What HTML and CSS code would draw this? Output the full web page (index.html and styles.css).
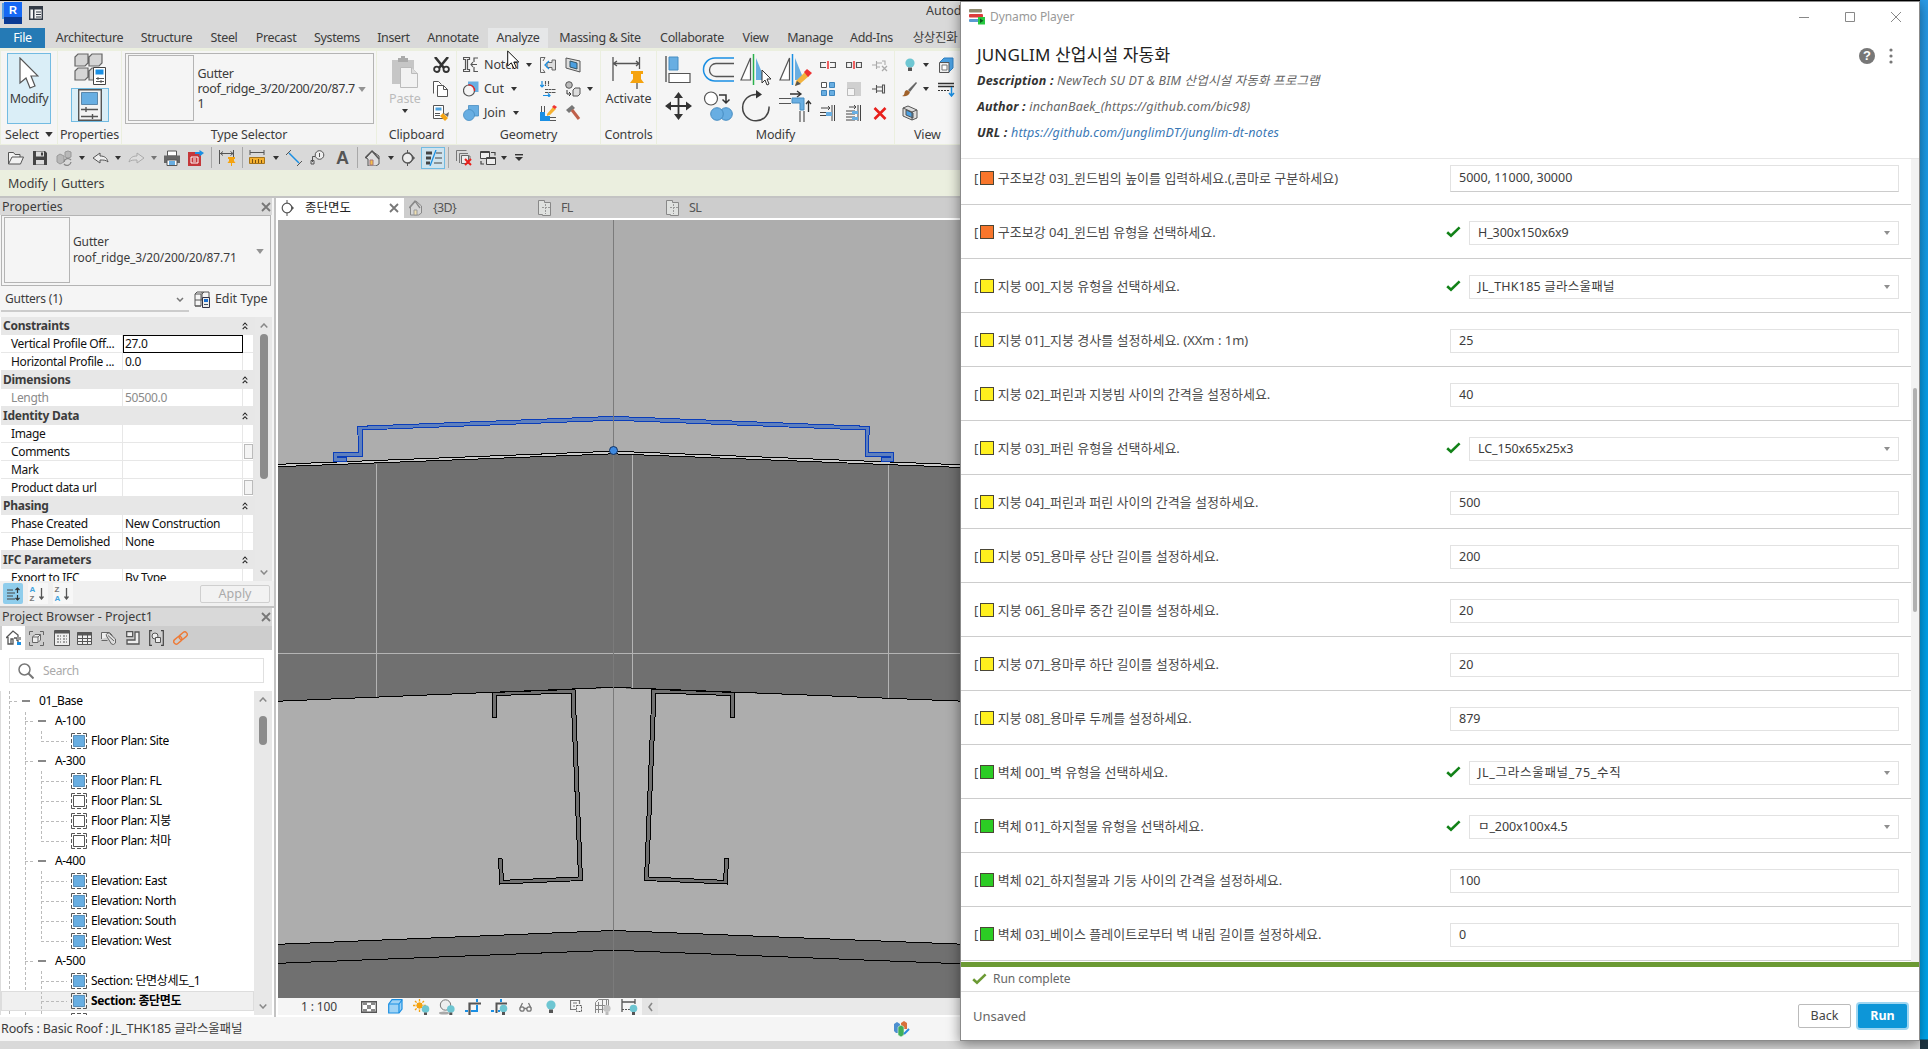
FILE: index.html
```html
<!DOCTYPE html>
<html lang="ko">
<head>
<meta charset="utf-8">
<title>Autodesk Revit - Dynamo Player</title>
<link rel="stylesheet" href="styles.css">
</head>
<body>
<svg class="defs" aria-hidden="true">
  <symbol id="arr" viewBox="0 0 6 4"><path d="M0 0h6L3 4z" fill="#333"/></symbol>
  <symbol id="chk" viewBox="0 0 15 12"><path d="M1.2 6.2 5 9.8 13.6 1.4" fill="none" stroke="currentColor" stroke-width="2.6"/></symbol>
  <symbol id="x" viewBox="0 0 10 10"><path d="M1 1l8 8M9 1 1 9" stroke="#777" stroke-width="1.8"/></symbol>
  <symbol id="up2" viewBox="0 0 6 8"><path d="M.7 3.5 3 1l2.3 2.5M.7 7.2 3 4.7l2.3 2.5" fill="none" stroke="#222" stroke-width="1.1"/></symbol>
  <symbol id="chev" viewBox="0 0 8 5"><path d="M.7 4.4 4 1l3.300 3.400" fill="none" stroke="#888" stroke-width="1.500"/></symbol>
  <symbol id="vw" viewBox="0 0 16 16"><path d="M.5 4V.5H4M6 .5h4M12 .5h3.500V4M15.500 6v4M15.500 12v3.500H12M10 15.500H6M4 15.500H.5V12M.5 10V6" fill="none" stroke="#555"/><path d="M2.500 2.500h11v11h-11z" fill="#68aee2" stroke="#5a8fb8"/></symbol>
  <symbol id="vwo" viewBox="0 0 16 16"><path d="M.5 4V.5H4M6 .5h4M12 .5h3.500V4M15.500 6v4M15.500 12v3.500H12M10 15.500H6M4 15.500H.5V12M.5 10V6" fill="none" stroke="#555"/><path d="M2.500 2.500h11v11h-11z" fill="#fff" stroke="#555"/></symbol>
  <symbol id="bulb" viewBox="0 0 10 14"><circle cx="5" cy="5" r="4.600" fill="#6ec6d2"/><path d="M3 9.500h4V13H3z" fill="#555"/></symbol>
  <symbol id="sheet" viewBox="0 0 14 16"><path d="M.5.500h6v2h6v13H4.500v-1h-4z" fill="#dfe1df" stroke="#888"/><path d="M7.500 4v10M4 7.500h8" stroke="#999" stroke-dasharray="2 1"/></symbol>
</svg>

<div class="desktop">
<main class="revit">
  <header class="titlebar">
    <svg width="20" height="22" viewBox="0 0 20 22"><path d="M0 1h18v16H0z" fill="#5b9fe0"/><path d="M2 0h18v15H2z" fill="#1568f4"/><path d="M2 15h18v7H2z" fill="#0a3a94"/><text x="7" y="12" class="logo-r">R</text></svg>
    <svg width="14" height="14" viewBox="0 0 14 14"><path d="M.7.700h12.600v12.600H.7z" fill="#f4f4f4" stroke="#333a45" stroke-width="1.400"/><path d="M1 1h12v2.500H1zM4 3h1.500v10H4z" fill="#333a45"/><path d="M7 6h5M7 8.500h5M7 11h5" stroke="#333a45"/></svg>
    <span class="app-name">Autodesk</span>
  </header>
  <nav class="tabs">
    <span class="file">File</span><span>Architecture</span><span>Structure</span><span>Steel</span><span>Precast</span><span>Systems</span><span>Insert</span><span>Annotate</span><span class="hover">Analyze</span><span>Massing &amp; Site</span><span>Collaborate</span><span>View</span><span>Manage</span><span>Add-Ins</span><span>상상진화</span>
  </nav>

  <section class="ribbon">
    <div class="panel p-select">
      <div class="big on">
        <svg width="20" height="32" viewBox="0 0 20 32"><path d="M1 1v25l6-5 4 10 5-2-4-10h7z" fill="#fff" stroke="#555" stroke-width="1.200"/></svg>
        <span>Modify</span>
      </div>
      <footer>Select <svg width="8" height="5"><use href="#arr"/></svg></footer>
    </div>
    <div class="panel p-props">
      <svg width="32" height="32" viewBox="0 0 32 32"><g fill="#d5d5d5" stroke="#666" stroke-width="1.200"><path d="M1 4l3-3h10v9l-3 3H1zM15 4l3-3h10v9l-3 3H15zM1 18l3-3h10v9l-3 3H1zM15 18l3-3h10v9l-3 3H15z"/></g><path d="M19.500 14.500h12v17h-12z" fill="#fff" stroke="#444"/><path d="M21.500 16.500h8v5h-8z" fill="#1a8fe3"/><path d="M22 25.500h8M22 28.500h8M24 24v3M27 27v3" stroke="#555"/></svg>
      <div class="props-on"><svg width="24" height="32" viewBox="0 0 24 32"><path d="M.7.700h22.600v30.600H.7z" fill="#f3f3f3" stroke="#555" stroke-width="1.400"/><path d="M3.500 3.500h16v12h-16z" fill="#68aee2" stroke="#5b87aa"/><path d="M3 20.500h17M3 27.500h17M8 18v5M14.500 25v5" stroke="#555" stroke-width="1.400"/></svg></div>
      <footer>Properties</footer>
    </div>
    <div class="panel p-type">
      <div class="typebox"><i></i><p>Gutter<br>roof_ridge_3/20/200/20/87.7<br>1</p><svg width="8" height="5"><use href="#arr" opacity=".5"/></svg></div>
      <footer>Type Selector</footer>
    </div>
    <div class="panel p-clip">
      <div class="cols">
        <div class="big dim">
          <svg width="28" height="33" viewBox="0 0 28 33"><path d="M1 4h22v24H1z" fill="#c6c6c6"/><path d="M7 6V2h3V0h4v2h3v4z" fill="#aaa"/><path d="M9.500 11.500h11l6 6v14h-17z" fill="#f2f2f2" stroke="#bbb"/><path d="M20.500 11.500v6h6" fill="#ddd" stroke="#bbb"/></svg>
          <span>Paste</span><svg width="6" height="4"><use href="#arr"/></svg>
        </div>
        <div class="stack">
          <svg width="17" height="16" viewBox="0 0 17 16"><path d="M2 0l9 11M15 0 6 11" stroke="#333" stroke-width="2.600"/><g fill="none" stroke="#333" stroke-width="1.800"><circle cx="3.800" cy="12.300" r="2.700"/><circle cx="13.200" cy="12.300" r="2.700"/></g></svg>
          <svg width="15" height="16" viewBox="0 0 15 16"><path d="M.5 12.500V.500h5l3 3M4.500 4.500h6l4 4v7h-10z" fill="#fff" stroke="#555"/><path d="M10.500 4.500v4h4" fill="none" stroke="#555"/></svg>
          <svg width="17" height="16" viewBox="0 0 17 16"><path d="M.5.500h10v13H.5z" fill="#fff" stroke="#555"/><path d="M2.500 2.500h6v3h-6z" fill="#4fa2dd"/><path d="M2 8.500h5M2 10.500h5" stroke="#555"/><path d="M7 11l3-3 5 5-3 3z" fill="#f5a514"/><path d="M10 8l3 1 3-2-1 5z" fill="#666"/></svg>
        </div>
      </div>
      <footer>Clipboard</footer>
    </div>
    <div class="panel p-geom">
      <div class="cols">
        <div class="stack">
          <div class="tool"><svg width="16" height="16" viewBox="0 0 16 16"><path d="M.5.500h6v2h-2v10h2v2h-6v-2h2v-10h-2zM15 1h-4v4M11 10v4.500h4M8 7.500h6M10 5l-2 2.500 2 2.500" fill="none" stroke="#555" stroke-width="1.200"/></svg><span>Notch</span><svg width="6" height="4"><use href="#arr"/></svg></div>
          <div class="tool"><svg width="16" height="16" viewBox="0 0 16 16"><path d="M5 .500h10.500V11H5z" fill="#68aee2"/><circle cx="6" cy="9.500" r="5.500" fill="#f5f5f5" stroke="#555" stroke-width="1.200"/><path d="M5.500 4a5.500 5.500 0 0 1 6 6" fill="none" stroke="#e22" stroke-width="1.300"/></svg><span>Cut</span><svg width="6" height="4"><use href="#arr"/></svg></div>
          <div class="tool"><svg width="16" height="16" viewBox="0 0 16 16"><g fill="#68aee2" stroke="#478dc2" stroke-width=".8"><path d="M5.500.500h10V11h-10z"/><circle cx="6" cy="10" r="5.500"/></g></svg><span>Join</span><svg width="6" height="4"><use href="#arr"/></svg></div>
        </div>
        <div class="stack">
          <svg width="16" height="16" viewBox="0 0 16 16"><path d="M5 .500H.500v15H5M5 .500 3 4M5 15.500l-2-3" fill="none" stroke="#666"/><path d="M7 5.500h5V3h3.500v10H12v-2.500H7z" fill="#ddd" stroke="#666"/><path d="M9 4 5 8l4 4" fill="none" stroke="#1a8fe3" stroke-width="1.300"/></svg>
          <svg width="16" height="16" viewBox="0 0 16 16"><path d="M2 0v6M0 4l2 2 2-2M3 14.500h6M8 12.500l2 2-2 2" fill="none" stroke="#1a8fe3" stroke-width="1.200"/><path d="M5.500 0v5M8.500 0v5M5 8.500h11M5 11.500h11" stroke="#555" stroke-width="1.100" stroke-dasharray="3 .5"/></svg>
          <svg width="17" height="16" viewBox="0 0 17 16"><path d="M1.500 1v7M4.500 1v6M10 12.500h6M10 15.500h6" stroke="#555"/><path d="M0 7h5v4h5v5H0z" fill="#1a8fe3"/><path d="M7 9l6-7 3 2-6 6-3 1z" fill="#f5b131"/><path d="M12 2l2-2 3 2-2 2z" fill="#e33"/></svg>
        </div>
        <div class="stack">
          <svg width="16" height="16" viewBox="0 0 16 16"><path d="M1 1l14 3v11L1 11z" fill="#ddd" stroke="#555"/><path d="M5 4l7 2v6l-7-2z" fill="#4b9fe0" stroke="#356"/></svg>
          <div class="tool mat"><svg width="16" height="16" viewBox="0 0 16 16"><circle cx="4" cy="4" r="3.300" fill="#bbb" stroke="#555"/><path d="M2 9v4h4M4 11l2 2-2 2" fill="none" stroke="#333"/><path d="M8 9l2-2h5v6l-2 2H8z" fill="#ddd" stroke="#555"/></svg><svg width="6" height="4"><use href="#arr"/></svg></div>
          <svg width="16" height="16" viewBox="0 0 16 16"><path d="M1 5l6-5 3 3-6 5z" fill="#777"/><path d="M7 5l7 9" stroke="#c0604a" stroke-width="3"/></svg>
        </div>
      </div>
      <footer>Geometry</footer>
    </div>
    <div class="panel p-ctrl">
      <div class="big">
        <svg width="32" height="32" viewBox="0 0 32 32"><path d="M1 0v24M27.500 0v12M1 6.500h26M5 4 1.500 6.500 5 9M24 4l3 2.500L24 9" fill="none" stroke="#555" stroke-width="1.300"/><path d="M19 14h12v3h-2v5l3 4H18l3-4v-5h-2z" fill="#f5a30f"/><path d="M25 26v6" stroke="#555" stroke-width="1.300"/></svg>
        <span>Activate</span>
      </div>
      <footer>Controls</footer>
    </div>
    <div class="panel p-mod">
      <div class="cols">
        <div class="biggrid">
          <svg width="32" height="32" viewBox="0 0 32 32"><path d="M1 2v26" stroke="#555" stroke-width="1.400"/><path d="M4 3h9v13H4z" fill="#68aee2" stroke="#478dc2"/><path d="M4 19.500h21v9H4z" fill="#fff" stroke="#555" stroke-width="1.200"/></svg>
          <svg width="32" height="32" viewBox="0 0 32 32"><path d="M32 4H13a11.500 11.500 0 0 0 0 23h19" fill="none" stroke="#1a8fe3" stroke-width="1.500"/><path d="M32 9.500H14a6.500 6.500 0 0 0 0 13h18" fill="none" stroke="#555" stroke-width="1.300"/></svg>
          <svg width="32" height="32" viewBox="0 0 32 32"><path d="M10.500 4v22H1z" fill="#fff" stroke="#555" stroke-width="1.200"/><path d="M16 4v22h9z" fill="#68aee2"/><path d="M13.500 0v31" stroke="#2bb24c" stroke-width="1.500"/><path d="M22 16v13l3-3 2 5 2-1-2-5h4z" fill="#fff" stroke="#333"/></svg>
          <svg width="33" height="32" viewBox="0 0 33 32"><path d="M10.500 4v22H1z" fill="#fff" stroke="#555" stroke-width="1.200"/><path d="M16 4v22h9z" fill="#68aee2"/><path d="M13.500 0v31" stroke="#1a8fe3" stroke-width="1.500"/><path d="M17 27l9-9 4 4-8 7-6 3z" fill="#f3b33e"/><path d="M25 18l3-3 5 4-4 4z" fill="#e33"/><path d="M16 32l2-5 4 3z" fill="#555"/></svg>
          <svg width="32" height="32" viewBox="0 0 32 32"><path d="M13.500 6v20M3 16h21" stroke="#333" stroke-width="1.800"/><path d="M13.500 2 9 8h9zM13.500 30 9 24h9zM0 16l6-4.500v9zM27 16l-6-4.500v9z" fill="#333"/></svg>
          <svg width="32" height="32" viewBox="0 0 32 32"><circle cx="9" cy="8.500" r="6.500" fill="#fff" stroke="#555" stroke-width="1.200"/><path d="M17 5h7v8M20.500 9.500 24 13l3.500-3.500" fill="none" stroke="#333" stroke-width="1.500"/><g fill="#68aee2" stroke="#478dc2"><circle cx="24" cy="24" r="6.300"/><circle cx="15" cy="24" r="6.300"/></g></svg>
          <svg width="32" height="32" viewBox="0 0 32 32"><path d="M17 4.500a13.200 13.200 0 1 0 12 12" fill="none" stroke="#444" stroke-width="1.500"/><path d="M16 0l6 4.500-6 4z" fill="#333"/></svg>
          <svg width="33" height="32" viewBox="0 0 33 32"><path d="M11 4h11M18 1l4 3-4 3M29.500 22V11M27 14l2.500-3 2.500 3" fill="none" stroke="#333" stroke-width="1.300"/><path d="M0 8.500h12M0 13.500h12M21 21v11M25 21v11" stroke="#555" stroke-width="1.200"/><path d="M13 8h12v12h-4v-7h-8z" fill="#68aee2" stroke="#478dc2"/></svg>
        </div>
        <div class="smallgrid">
          <svg width="16" height="16" viewBox="0 0 16 16"><path d="M6 5.500H.5v5H6M10 5.500h5.500v5H10" fill="none" stroke="#555" stroke-width="1.200"/><path d="M8 4v8" stroke="#e22" stroke-width="1.400"/></svg>
          <svg width="16" height="16" viewBox="0 0 16 16"><path d="M.5 5.500h5v5h-5zM10.500 5.500h5v5h-5z" fill="none" stroke="#555" stroke-width="1.200"/><path d="M8 4v8" stroke="#e22" stroke-width="1.400"/></svg>
          <svg width="16" height="16" viewBox="0 0 16 16"><path d="M0 8h4M4.500 4v8M5 6h5M5 10h3M10 4h3v4" fill="none" stroke="#aaa" stroke-width="1.100"/><path d="M10 9l5 5M15 9l-5 5" stroke="#aaa" stroke-width="1.300"/></svg>
          <svg width="16" height="16" viewBox="0 0 16 16"><path d="M1.500 1.500h5v5h-5z" fill="#fff" stroke="#555"/><path d="M9.500 1.500h5v5h-5zM1.500 9.500h5v5h-5zM9.500 9.500h5v5h-5z" fill="#68aee2" stroke="#3f86bd"/></svg>
          <svg width="16" height="16" viewBox="0 0 16 16"><path d="M1 1h14v14H1z" fill="#d0d0d0"/><path d="M1.500 7.500h7v7h-7z" fill="#f5f5f5" stroke="#bbb"/></svg>
          <svg width="16" height="16" viewBox="0 0 16 16"><path d="M0 8h4M4.500 4v8M5 6h6M5 10h6M10.500 4h2v8h-2z" fill="none" stroke="#555" stroke-width="1.100"/></svg>
          <svg width="16" height="16" viewBox="0 0 16 16"><path d="M1 3h9M8 1l2 2-2 2M0 7.500h9M0 10.500h9M12 0v16M14.500 0v16" fill="none" stroke="#444"/><path d="M6 7h6v4H6z" fill="#68aee2"/></svg>
          <svg width="16" height="16" viewBox="0 0 16 16"><path d="M3 2h7M8 0l2 2-2 2M0 6h9M0 9h9M0 12h9M0 15h9M12 0v16M14.500 0v16" fill="none" stroke="#444"/><path d="M6 6h6v3H6zM6 12h6v3H6z" fill="#68aee2"/></svg>
          <svg width="16" height="16" viewBox="0 0 16 16"><path d="M2.500 3l11 11M13.500 3l-11 11" stroke="#e8201c" stroke-width="2.600"/></svg>
        </div>
      </div>
      <footer>Modify</footer>
    </div>
    <div class="panel p-view">
      <div class="viewgrid">
        <svg width="16" height="14"><use href="#bulb"/></svg><svg width="6" height="4"><use href="#arr"/></svg>
        <svg width="16" height="16" viewBox="0 0 16 16"><path d="M2 5l4-4h9v10l-4 4" fill="#4b9fe0" stroke="#2f7fc0"/><path d="M1.500 5.500h9.500v10H1.500z" fill="#eee" stroke="#555"/><path d="M4 8h5v5H4z" fill="#fff" stroke="#777"/></svg>
        <svg width="16" height="16" viewBox="0 0 16 16"><path d="M0 15c4-1 1-5 5-6l3 2c-1 4-5 5-8 4z" fill="#a0612a"/><path d="M6 9l8-8 1 1-7 9z" fill="#666"/></svg><svg width="6" height="4"><use href="#arr"/></svg>
        <svg width="17" height="16" viewBox="0 0 17 16"><path d="M0 2.500h16M0 5.500h16" stroke="#333" stroke-width="1.300"/><path d="M0 9.500h12" stroke="#333" stroke-dasharray="2 1"/><path d="M13.500 6v8M11 12l2.500 3 2.500-3" fill="none" stroke="#1a8fe3" stroke-width="1.500"/></svg>
        <svg width="16" height="16" viewBox="0 0 16 16"><path d="M1 3l5-2 9 4v8l-5 2-9-4z" fill="#ddd" stroke="#555"/><path d="M4 5l7 3v5l-7-3z" fill="#4b9fe0" stroke="#555"/><path d="M10 15V7L1 3M10 7l5-2" fill="none" stroke="#555"/></svg>
      </div>
      <footer>View</footer>
    </div>
  </section>

  <div class="qat">
    <svg width="16" height="16" viewBox="0 0 16 16"><path d="M.5 14V2.500h5l1.500 2h5V7M.5 14 4 7h11.500l-3 7z" fill="#f2f2f2" stroke="#555"/></svg>
    <svg width="16" height="16" viewBox="0 0 16 16"><path d="M1 1h12l2 2v12H1z" fill="#444"/><path d="M4 1.500h8v5H4zM4 10h8v4.500H4z" fill="#ddd"/><path d="M9 2.500h2v3H9z" fill="#444"/></svg>
    <svg width="17" height="16" viewBox="0 0 17 16"><path d="M1 6l3-2 4 2v6l-4 2-3-2zM9 2l3-1 3 1v5l-3 1-3-1z" fill="#b8b8b8" stroke="#999"/><path d="M8 12a4 4 0 0 1 7-2M15 12a4 4 0 0 1-7 2" fill="none" stroke="#888" stroke-width="1.300"/></svg>
    <svg width="6" height="4"><use href="#arr"/></svg>
    <svg width="17" height="16" viewBox="0 0 17 16"><path d="M1 8l7-5v3c5 0 7 2 8 6-2-2-4-2-8-2v3z" fill="#eee" stroke="#555"/></svg>
    <svg width="6" height="4"><use href="#arr"/></svg>
    <svg width="17" height="16" viewBox="0 0 17 16"><path d="M16 8 9 3v3C4 6 2 8 1 12c2-2 4-2 8-2v3z" fill="#ddd" stroke="#aaa"/></svg>
    <svg width="6" height="4"><use href="#arr" opacity=".6"/></svg>
    <svg width="16" height="16" viewBox="0 0 16 16"><path d="M3.500 1h9v5h-9z" fill="#fff" stroke="#555"/><path d="M0 5.500h16V13H0z" fill="#666"/><path d="M3 10h10v5.500H3z" fill="#fff" stroke="#555"/><path d="M5 11h6v4H5z" fill="#68aee2"/></svg>
    <svg width="17" height="16" viewBox="0 0 17 16"><path d="M0 2h13v14H0z" fill="#c5383b"/><path d="M3 7h7v6H3zM5 9h3M5 11h3" fill="none" stroke="#fff"/><path d="M7 3h6" stroke="#1a8fe3" stroke-width="2"/><path d="M11.500 0 16 3l-4.500 3.500z" fill="#1a8fe3"/></svg>
    <i class="sep"></i>
    <svg width="17" height="16" viewBox="0 0 17 16"><path d="M.5 0v14M14.500 0v7M1 3.500h13M4 1.500 1.500 3.500 4 5.500M11.500 1.500l2.500 2-2.500 2" fill="none" stroke="#555"/><path d="M9 7h7v2h-1v2l1.500 2h-8L10 11V9H9zM12 13h1v3h-1z" fill="#f5a30f"/></svg>
    <i class="sep"></i>
    <svg width="17" height="16" viewBox="0 0 17 16"><path d="M1 2.500h14M1 0v5M15 0v5" stroke="#555"/><path d="M.5 7.500h15v6H.5z" fill="#f5b131" stroke="#a8751a"/><path d="M3.500 9v4M6.500 10v3M9.500 9v4M12.500 10v3" stroke="#7a5310"/></svg>
    <svg width="6" height="4"><use href="#arr"/></svg>
    <svg width="16" height="16" viewBox="0 0 16 16"><path d="M3 3l10 10" stroke="#1a8fe3" stroke-width="1.500"/><path d="M0 5l5-5M11 16l5-5" stroke="#555"/></svg>
    <svg width="16" height="16" viewBox="0 0 16 16"><circle cx="9.500" cy="5" r="4.300" fill="#eee" stroke="#555"/><path d="M9.500 3v4M5 6.500H2.500V12M1 10.500h3V14H1z" fill="none" stroke="#555"/></svg>
    <b class="a-icon">A</b>
    <i class="sep"></i>
    <svg width="16" height="16" viewBox="0 0 16 16"><path d="M1 8l6-7 7 5v8l-3 2H3V9z" fill="#ddd" stroke="#555"/><path d="M0 8l7-7 7 8" fill="none" stroke="#555" stroke-width="1.400"/><path d="M5 10h3v5H5z" fill="#f5c04a" stroke="#a77"/></svg>
    <svg width="6" height="4"><use href="#arr"/></svg>
    <svg width="16" height="16" viewBox="0 0 16 16"><path d="M7.500 0v16M9 2.500 14.500 8 9 13.500z" fill="#555" stroke="#555"/><circle cx="7.500" cy="8" r="5" fill="#eee" stroke="#555" stroke-width="1.300"/></svg>
    <div class="thin"><svg width="17" height="16" viewBox="0 0 17 16"><path d="M1 3h6M1 8h5M1 13h4" stroke="#444" stroke-width="3"/><path d="M11 3h6M10 8h7M9 13h8" stroke="#444"/><path d="M11 0 5 16" stroke="#1a8fe3" stroke-width="1.300"/></svg></div>
    <i class="sep"></i>
    <svg width="17" height="16" viewBox="0 0 17 16"><path d="M.5 11V.5h10M3.500 13V3.500H12M6.500 14V6H14v3" fill="none" stroke="#777"/><path d="M5.500 5.500h7v8h-7z" fill="#eee" stroke="#666"/><path d="M9 9l6 6M15 9l-6 6" stroke="#e8201c" stroke-width="2"/></svg>
    <svg width="17" height="16" viewBox="0 0 17 16"><path d="M.5 1.500h9v7h-9zM6.500 7.500h9v7h-9z" fill="#eee" stroke="#444"/><path d="M.5 2.500h9M6.500 8.500h9M11 2.500h4v3M4 14H1v-3" fill="none" stroke="#444" stroke-width="1.200"/></svg>
    <svg width="6" height="4"><use href="#arr"/></svg>
    <svg width="8" height="8" viewBox="0 0 8 8"><path d="M0 .7h8" stroke="#333" stroke-width="1.400"/><path d="M0 3h8L4 7z" fill="#333"/></svg>
  </div>
  <div class="options">Modify | Gutters</div>

  <div class="work">
    <aside class="dock">
      <section class="props">
        <h2>Properties<svg width="10" height="10"><use href="#x"/></svg></h2>
        <div class="typebox2"><i></i><p>Gutter<br>roof_ridge_3/20/200/20/87.71</p><svg width="8" height="5"><use href="#arr" opacity=".5"/></svg></div>
        <div class="filter">
          <div class="combo"><span>Gutters (1)</span><svg width="8" height="5" viewBox="0 0 8 5"><path d="M1 1l3 3 3-3" fill="none" stroke="#777" stroke-width="1.500"/></svg></div>
          <svg width="16" height="17" viewBox="0 0 16 17"><path d="M1 3l2-2h12v8M1 3h6v12H1zM8 3l2-2M7 9h8M1 9h6M1 15h6M8 1v8" fill="none" stroke="#555"/><path d="M8.500 6.500h7v10h-7z" fill="#eee" stroke="#334"/><path d="M10 8h4v3h-4z" fill="#1a6fd0"/><path d="M10 13.500h4" stroke="#456"/></svg>
          <span>Edit Type</span>
        </div>
        <div class="gridwrap">
          <div class="pgrid">
            <div class="gh">Constraints<svg width="6" height="8"><use href="#up2"/></svg></div>
            <div class="gr edit"><span>Vertical Profile Off...</span><span>27.0</span><span></span></div>
            <div class="gr"><span>Horizontal Profile ...</span><span>0.0</span><span></span></div>
            <div class="gh">Dimensions<svg width="6" height="8"><use href="#up2"/></svg></div>
            <div class="gr ro"><span>Length</span><span>50500.0</span><span></span></div>
            <div class="gh">Identity Data<svg width="6" height="8"><use href="#up2"/></svg></div>
            <div class="gr"><span>Image</span><span></span><span></span></div>
            <div class="gr"><span>Comments</span><span></span><span><i></i></span></div>
            <div class="gr"><span>Mark</span><span></span><span></span></div>
            <div class="gr"><span>Product data url</span><span></span><span><i></i></span></div>
            <div class="gh">Phasing<svg width="6" height="8"><use href="#up2"/></svg></div>
            <div class="gr"><span>Phase Created</span><span>New Construction</span><span></span></div>
            <div class="gr"><span>Phase Demolished</span><span>None</span><span></span></div>
            <div class="gh">IFC Parameters<svg width="6" height="8"><use href="#up2"/></svg></div>
            <div class="gr"><span>Export to IFC</span><span>By Type</span><span></span></div>
          </div>
          <div class="sb"><svg width="8" height="5"><use href="#chev"/></svg><i class="thumb"></i><svg class="dn" width="8" height="5"><use href="#chev"/></svg></div>
        </div>
        <div class="pfoot">
          <div class="sort on"><svg width="14" height="14" viewBox="0 0 14 14"><path d="M1 3h6M1 6h8M1 9h6M1 12h8" stroke="#444"/><path d="M11.500 1v5M9.500 3l2-2 2 2M11.500 8v5M9.500 11l2 2 2-2" fill="none" stroke="#333" stroke-width="1.200"/></svg></div>
          <div class="sort"><b>A</b><b class="gray">Z</b><svg width="5" height="12" viewBox="0 0 5 12"><path d="M2.500 0v11M.5 8.500l2 2.500 2-2.500" fill="none" stroke="#555" stroke-width="1.300"/></svg></div>
          <div class="sort"><b class="gray">Z</b><b>A</b><svg width="5" height="12" viewBox="0 0 5 12"><path d="M2.500 0v11M.5 8.500l2 2.500 2-2.500" fill="none" stroke="#555" stroke-width="1.300"/></svg></div>
          <button>Apply</button>
        </div>
      </section>
      <section class="browser">
        <h2>Project Browser - Project1<svg width="10" height="10"><use href="#x"/></svg></h2>
        <div class="btabs">
          <div class="on"><svg width="16" height="16" viewBox="0 0 16 16"><path d="M0 8l7-7 5 4v9M2 7v7h3M5 9h2v5H5zM8 8h3v3" fill="none" stroke="#555" stroke-width="1.300"/><path d="M11 7h4v3h-4z" fill="#999"/><path d="M11 12h4v3h-4z" fill="#1a8fe3"/></svg></div>
          <svg width="15" height="15" viewBox="0 0 15 15"><path d="M.5 4V.5H4M11 .5h3.500V4M14.500 11v3.500H11M4 14.500H.5V11" fill="none" stroke="#666"/><path d="M3.500 6 6 3.500h5.500V9L9 11.500H3.500zM3.500 6H9v5M9 6l2.500-2.500" fill="#eee" stroke="#666"/></svg>
          <svg width="16" height="16" viewBox="0 0 16 16"><path d="M.5.500h15v15H.5z" fill="#eee" stroke="#555"/><path d="M1 2h14" stroke="#555" stroke-width="3"/><path d="M3 6h4M9 6h4M3 9h4M9 9h4M3 12h4M9 12h4" stroke="#555" stroke-dasharray="2 1"/></svg>
          <svg width="15" height="13" viewBox="0 0 15 13"><path d="M.5.500h14v12H.5z" fill="#eee" stroke="#555"/><path d="M0 2h15" stroke="#555" stroke-width="3"/><path d="M0 6.500h15M0 9.500h15M5.500 2v10M10.500 2v10" stroke="#555"/></svg>
          <svg width="16" height="14" viewBox="0 0 16 14"><path d="M.5 8V1.500h8l3 3" fill="#eee" stroke="#666"/><path d="M.5 9.500h6" stroke="#666"/><path d="M5.500 5a2 2 0 0 1 3-2.500l6 5.500v4l-2 1.500-2-.5z" fill="#ddd" stroke="#666"/><path d="M7 4.500l6 5.500" stroke="#666"/></svg>
          <svg width="14" height="14" viewBox="0 0 14 14"><path d="M.7.700h6v5h-6v-5zM9 1h4v12H1V9h8z" fill="#eee" stroke="#555" stroke-width="1.300"/></svg>
          <svg width="15" height="16" viewBox="0 0 15 16"><path d="M3 .7H.7v14.600H3M12 .7h2.300v14.600H12" fill="none" stroke="#444" stroke-width="1.200"/><circle cx="6" cy="6" r="3" fill="#eee" stroke="#555"/><path d="M6.500 7.500h5v5h-5z" fill="#eee" stroke="#555"/></svg>
          <svg width="15" height="14" viewBox="0 0 15 14"><g fill="none" stroke="#ee7a36" stroke-width="1.400" transform="rotate(-40 7.500 7)"><rect x="-.5" y="4.500" width="9" height="5" rx="2.500"/><rect x="6.500" y="4.500" width="9" height="5" rx="2.500"/></g></svg>
        </div>
        <div class="bbody">
          <div class="search"><svg width="16" height="16" viewBox="0 0 16 16"><circle cx="6.500" cy="6.500" r="5.500" fill="none" stroke="#777" stroke-width="1.500"/><path d="M10.500 10.500l5 5" stroke="#777" stroke-width="2"/></svg>Search</div>
          <div class="treewrap">
            <ul class="tree">
              <li class="l0"><i></i>01_Base</li>
              <li class="l1"><i></i>A-100</li>
              <li class="l2 last"><svg width="16" height="16"><use href="#vw"/></svg>Floor Plan: Site</li>
              <li class="l1"><i></i>A-300</li>
              <li class="l2"><svg width="16" height="16"><use href="#vw"/></svg>Floor Plan: FL</li>
              <li class="l2"><svg width="16" height="16"><use href="#vwo"/></svg>Floor Plan: SL</li>
              <li class="l2"><svg width="16" height="16"><use href="#vwo"/></svg>Floor Plan: 지붕</li>
              <li class="l2 last"><svg width="16" height="16"><use href="#vwo"/></svg>Floor Plan: 처마</li>
              <li class="l1"><i></i>A-400</li>
              <li class="l2"><svg width="16" height="16"><use href="#vw"/></svg>Elevation: East</li>
              <li class="l2"><svg width="16" height="16"><use href="#vw"/></svg>Elevation: North</li>
              <li class="l2"><svg width="16" height="16"><use href="#vw"/></svg>Elevation: South</li>
              <li class="l2 last"><svg width="16" height="16"><use href="#vw"/></svg>Elevation: West</li>
              <li class="l1"><i></i>A-500</li>
              <li class="l2"><svg width="16" height="16"><use href="#vw"/></svg>Section: 단면상세도_1</li>
              <li class="l2 current"><svg width="16" height="16"><use href="#vw"/></svg>Section: 종단면도</li>
              <li class="l2"><svg width="16" height="16"><use href="#vwo"/></svg></li>
            </ul>
            <div class="sb"><svg width="8" height="5"><use href="#chev"/></svg><i class="thumb"></i><svg class="dn" width="8" height="5"><use href="#chev"/></svg></div>
          </div>
        </div>
      </section>
    </aside>

    <section class="view">
      <div class="vtabs">
        <div class="vt on"><svg width="14" height="16" viewBox="0 0 14 16"><path d="M6 0v16" stroke="#555"/><path d="M8 3l5 5-5 5z" fill="#555"/><circle cx="6" cy="8" r="4.800" fill="#fff" stroke="#555" stroke-width="1.200"/></svg><span>종단면도</span><svg class="close" width="10" height="10"><use href="#x"/></svg></div>
        <div class="vt"><svg width="14" height="16" viewBox="0 0 14 16"><path d="M1.500 7v8h8l3-2V6L7 1z" fill="#d5d5d5" stroke="#888"/><path d="M0 8l6-7 5 7" fill="none" stroke="#888" stroke-width="1.300"/><path d="M5 10h3v5H5z" fill="#f0e0b0" stroke="#999"/></svg><span>{3D}</span></div>
        <div class="vt sh"><svg width="14" height="16"><use href="#sheet"/></svg><span>FL</span></div>
        <div class="vt sh"><svg width="14" height="16"><use href="#sheet"/></svg><span>SL</span></div>
      </div>
      <svg class="canvas" width="1642" height="778" viewBox="278 220 1642 778" shape-rendering="crispEdges">
        <rect x="278" y="220" width="1642" height="778" fill="#adadad"/>
        <path d="M278 465 613 452 1000 469V703L613 688 278 701.500z" fill="#707070"/>
        <path d="M278 944.300 613.300 930.700 1000 946V998H278z" fill="#707070"/>
        <path d="M278 464.500 613.300 451.300 1000 466.500V469L613.300 453.700 278 467z" fill="#ccc"/>
        <g fill="none" stroke="#b4b4b4"><path d="M376.500 464v233M632.500 455v233M888.500 465v233M278 653.500h722"/></g>
        <g fill="none" stroke="#000"><path d="M278 464.300 613.300 451.200 1000 466.300M278 466.700 613.300 453.800 1000 469M278 701.200 613.300 687.300 1000 702.700M278 944.300 613.300 930.500 1000 945.700M278 963.300 613.300 950.200 1000 965.300"/></g>
        <g fill="#707070" stroke="#000">
          <path id="purlin" d="M492.500 692.500 575 689.300 582.500 880.500 499.700 884 498.500 858.500H502L503.500 880.300 578.500 877 571 693 496.300 695.500V717.500H492.500z"/>
          <use href="#purlin" transform="matrix(-1 0 0 1 1227 0)"/>
        </g>
        <path d="M613.500 416.400 357.500 426.400 359 452.800H333.500V461.300H346V457.500H337V456H362V430L613.500 420.200 865.500 430V456H890V457.500H881V461.300H893.500V452.800H868L869.500 426.400z" fill="#5f80bd" stroke="#0a3dba"/>
        <path d="M613.500 220v778" stroke="#7b7b7b"/>
        <circle cx="613.500" cy="450.500" r="4" fill="#3f8ae0" stroke="#14315f" shape-rendering="auto"/>
      </svg>
      <div class="vbar">
        <div class="vleft">
          <span>1 : 100</span>
          <svg width="16" height="12" viewBox="0 0 16 12"><path d="M.7.700h14.600v10.600H.7z" fill="#fff" stroke="#555" stroke-width="1.400"/><path d="M2 1h4v3H2zM10 1h4v3h-4zM6 4h4v4H6zM2 8h4v3H2zM10 8h4v3h-4z" fill="#888"/></svg>
          <svg width="15" height="15" viewBox="0 0 15 15"><path d="M.7 5 4 .7h10V10l-3 4H.7z" fill="#9fd3f5" stroke="#1a8fe3" stroke-width="1.200"/><path d="M1 5h10v9M11 5l3-4" fill="none" stroke="#1a8fe3" stroke-width="1.200"/></svg>
          <svg width="17" height="16" viewBox="0 0 17 16"><g stroke="#f5a30f" stroke-width="1.300"><path d="M6.500 0v13M0 6.500h13M2 2l9 9M11 2l-9 9"/></g><circle cx="6.500" cy="6.500" r="3.700" fill="#f5a30f" stroke="#f4f4f4"/><circle cx="12.500" cy="10" r="3.800" fill="#6ec6d2"/><path d="M11 13.500h3V16h-3z" fill="#555"/></svg>
          <svg width="16" height="16" viewBox="0 0 16 16"><ellipse cx="5" cy="14" rx="5" ry="1.500" fill="#aaa"/><circle cx="6.500" cy="6" r="5.200" fill="#eee" stroke="#777"/><circle cx="11.800" cy="10" r="3.800" fill="#6ec6d2"/><path d="M10.300 13.500h3V16h-3z" fill="#555"/></svg>
          <svg width="16" height="16" viewBox="0 0 16 16"><path d="M4.500 16V4.500H16" fill="none" stroke="#555" stroke-width="2.200"/><path d="M0 12h3M6 12h6V6M12 0v3" fill="none" stroke="#1a8fe3" stroke-width="2"/></svg>
          <svg width="17" height="16" viewBox="0 0 17 16"><path d="M5.500 14V4.500H16" fill="none" stroke="#555" stroke-width="2"/><path d="M0 12h3M10 0v3M7 12h2" fill="none" stroke="#1a8fe3" stroke-width="2"/><circle cx="12.500" cy="9.500" r="3.800" fill="#6ec6d2"/><path d="M11 13h3v3h-3z" fill="#555"/></svg>
          <svg width="13" height="10" viewBox="0 0 13 10"><g fill="none" stroke="#777" stroke-width="1.300"><circle cx="3" cy="7" r="2.200"/><circle cx="10" cy="7" r="2.200"/><path d="M1 6 3.500 1M12 6 9.500 1M5 6.500h3"/></g></svg>
          <svg width="10" height="14"><use href="#bulb"/></svg>
          <svg width="14" height="13" viewBox="0 0 14 13"><path d="M6 9.500H.5v-9h9V4M3 3h4M3 6h2" fill="none" stroke="#777" stroke-width="1.200"/><path d="M6.500 5.500h5v6h-5z" fill="none" stroke="#555" stroke-dasharray="2 1"/></svg>
          <svg width="16" height="16" viewBox="0 0 16 16"><path d="M.5 14V3.500l3-3h10V8M.5 6.500h10M.5 10.500h8M3.500 3v11M7.500 1v13M11.500 1v7" fill="none" stroke="#888"/><circle cx="12" cy="9.500" r="3.600" fill="#c4c4c4"/><path d="M10.500 13h3v3h-3z" fill="#bbb"/></svg>
          <svg width="17" height="16" viewBox="0 0 17 16"><path d="M1 0v13M14 0v5M1 3h13" stroke="#555" stroke-width="1.300"/><path d="M1 10.500h8" stroke="#555" stroke-dasharray="2 1"/><circle cx="12.500" cy="9.500" r="3.800" fill="#6ec6d2"/><path d="M11 13h3v3h-3z" fill="#555"/></svg>
          <div class="lt"><svg width="5" height="10" viewBox="0 0 5 10"><path d="M4 1 1 5l3 4" fill="none" stroke="#888" stroke-width="1.600"/></svg></div>
        </div>
      </div>
    </section>
  </div>
  <footer class="status"><span>Roofs : Basic Roof : JL_THK185 글라스울패널</span>
    <svg width="16" height="16" viewBox="0 0 16 16"><path d="M0 3l3-2 3 2v9H2L0 10z" fill="#4d8fd0"/><path d="M7 2l3-2 3 2v6H7z" fill="#d8703a"/><path d="M4 6l3-2 3 2v8l-3 2-3-2z" fill="#3fae5a" stroke="#e8f4ea" stroke-width=".6"/><path d="M10 13l5-5" fill="none" stroke="#2a8ae0" stroke-width="2"/></svg>
  </footer>
</main>

<section class="dynamo">
  <header class="dtitle">
    <svg width="16" height="16" viewBox="0 0 16 16"><rect width="13" height="3.500" rx="1" fill="#8f8b6f"/><rect y="5" width="14" height="3.500" rx="1" fill="#dc3c3c"/><rect y="10" width="12" height="3" rx="1" fill="#5a9bd0"/><path d="M9 8h7v7.500H9z" fill="#27c840"/><path d="M11 9.500l3.500 2.200L11 14z" fill="#0a5a1a"/></svg>
    <span>Dynamo Player</span>
    <div class="wc"><svg width="10" height="10" viewBox="0 0 10 10"><path d="M0 5.500h10" stroke="#888"/></svg><svg width="10" height="10" viewBox="0 0 10 10"><path d="M.5.500h9v9h-9z" fill="none" stroke="#888"/></svg><svg width="10" height="10" viewBox="0 0 10 10"><path d="M0 0l10 10M10 0 0 10" stroke="#888"/></svg></div>
  </header>
  <div class="dhead">
    <div class="dinfo">
      <h1>JUNGLIM 산업시설 자동화</h1>
      <p><b>Description : </b>NewTech SU DT &amp; BIM 산업시설 자동화 프로그램</p>
      <p><b>Author : </b>inchanBaek_(https://github.com/bic98)</p>
      <p><b>URL : </b><a>https://github.com/junglimDT/junglim-dt-notes</a></p>
    </div>
    <div class="dicons"><span class="help">?</span><svg width="4" height="16" viewBox="0 0 4 16"><g fill="#777"><circle cx="2" cy="2" r="1.600"/><circle cx="2" cy="8" r="1.600"/><circle cx="2" cy="14" r="1.600"/></g></svg></div>
  </div>
  <div class="dlist">
    <div class="rows">
      <div class="row first"><label>[<i class="orange"></i>구조보강 03]_윈드빔의 높이를 입력하세요.(,콤마로 구분하세요)</label><div class="inp">5000, 11000, 30000</div></div>
      <div class="row"><label>[<i class="orange"></i>구조보강 04]_윈드빔 유형을 선택하세요.</label><svg width="15" height="12"><use href="#chk"/></svg><div class="pick">H_300x150x6x9<svg width="6" height="4"><use href="#arr" opacity=".55"/></svg></div></div>
      <div class="row"><label>[<i class="yellow"></i>지붕 00]_지붕 유형을 선택하세요.</label><svg width="15" height="12"><use href="#chk"/></svg><div class="pick ko">JL_THK185 글라스울패널<svg width="6" height="4"><use href="#arr" opacity=".55"/></svg></div></div>
      <div class="row"><label>[<i class="yellow"></i>지붕 01]_지붕 경사를 설정하세요. (XXm : 1m)</label><div class="inp">25</div></div>
      <div class="row"><label>[<i class="yellow"></i>지붕 02]_퍼린과 지붕빔 사이의 간격을 설정하세요.</label><div class="inp">40</div></div>
      <div class="row"><label>[<i class="yellow"></i>지붕 03]_퍼린 유형을 선택하세요.</label><svg width="15" height="12"><use href="#chk"/></svg><div class="pick">LC_150x65x25x3<svg width="6" height="4"><use href="#arr" opacity=".55"/></svg></div></div>
      <div class="row"><label>[<i class="yellow"></i>지붕 04]_퍼린과 퍼린 사이의 간격을 설정하세요.</label><div class="inp">500</div></div>
      <div class="row"><label>[<i class="yellow"></i>지붕 05]_용마루 상단 길이를 설정하세요.</label><div class="inp">200</div></div>
      <div class="row"><label>[<i class="yellow"></i>지붕 06]_용마루 중간 길이를 설정하세요.</label><div class="inp">20</div></div>
      <div class="row"><label>[<i class="yellow"></i>지붕 07]_용마루 하단 길이를 설정하세요.</label><div class="inp">20</div></div>
      <div class="row"><label>[<i class="yellow"></i>지붕 08]_용마루 두께를 설정하세요.</label><div class="inp">879</div></div>
      <div class="row"><label>[<i class="green"></i>벽체 00]_벽 유형을 선택하세요.</label><svg width="15" height="12"><use href="#chk"/></svg><div class="pick ko wide">JL_그라스울패널_75_수직<svg width="6" height="4"><use href="#arr" opacity=".55"/></svg></div></div>
      <div class="row"><label>[<i class="green"></i>벽체 01]_하지철물 유형을 선택하세요.</label><svg width="15" height="12"><use href="#chk"/></svg><div class="pick">ㅁ_200x100x4.5<svg width="6" height="4"><use href="#arr" opacity=".55"/></svg></div></div>
      <div class="row"><label>[<i class="green"></i>벽체 02]_하지철물과 기둥 사이의 간격을 설정하세요.</label><div class="inp">100</div></div>
      <div class="row"><label>[<i class="green"></i>벽체 03]_베이스 플레이트로부터 벽 내림 길이를 설정하세요.</label><div class="inp">0</div></div>
    </div>
    <div class="track"><i></i></div>
  </div>
  <div class="run"><svg width="15" height="12"><use href="#chk"/></svg>Run complete</div>
  <footer class="dfoot"><span>Unsaved</span><button>Back</button><button class="primary">Run</button></footer>
</section>
<svg class="cursor" width="14" height="20" viewBox="0 0 14 20"><path d="M.7 1v15l3.600-3.200L7 18.700l2.400-1-2.600-5.700h5z" fill="#fff" stroke="#111"/></svg>
</div>
</body>
</html>
```
FILE: styles.css
```css
* { box-sizing: border-box; margin: 0; padding: 0; }
body { width: 1928px; height: 1049px; overflow: hidden; font: 12px/16px "Noto Sans", "Noto Sans CJK KR", sans-serif; letter-spacing: -.35px; color: #3c3c3c; white-space: nowrap; }
svg { display: block; flex: none; }
i { display: block; flex: none; font-style: normal; }
.defs { display: none; }
.desktop { position: relative; width: 1928px; height: 1049px; background: linear-gradient(#2a9be8, #00a2ed 45%, #00a8f0 1039px, #1d3441 1040px); }

/* ---- Revit main window ---- */
.revit { width: 1920px; height: 1049px; display: flex; flex-direction: column; background: #d9d9d9; border-top: 1px solid #000; }
.titlebar { height: 27px; display: flex; gap: 7px; padding: 1px 0 0 2px; }
.titlebar svg + svg { margin-top: 4px; }
.logo-r { font: bold 11px "Liberation Sans"; fill: #fff; }
.app-name { margin: 1px 0 0 876px; font-size: 12.500px; letter-spacing: 0; width: 34px; overflow: visible; }
.tabs { height: 20px; display: flex; font-size: 12.500px; line-height: 19px; }
.tabs span { flex: none; text-align: center; }
.tabs .file { background: #257ab5; color: #fff; width: 45px; margin-right: 2px; }
.tabs .hover { background: #e6e7e8; }
.tabs span:nth-child(2) { width: 85px; }
.tabs span:nth-child(3) { width: 69px; }
.tabs span:nth-child(4) { width: 46px; }
.tabs span:nth-child(5) { width: 58px; }
.tabs span:nth-child(6) { width: 64px; }
.tabs span:nth-child(7) { width: 49px; }
.tabs span:nth-child(8) { width: 70px; }
.tabs span:nth-child(9) { width: 60px; }
.tabs span:nth-child(10) { width: 104px; }
.tabs span:nth-child(11) { width: 80px; }
.tabs span:nth-child(12) { width: 47px; }
.tabs span:nth-child(13) { width: 62px; }
.tabs span:nth-child(14) { width: 61px; }
.tabs span:nth-child(15) { width: 66px; }

.ribbon { height: 97px; background: #ebefdf; padding: 3px 0 1px 1px; display: flex; gap: 1px; }
.panel { background: #f5f5f5; height: 93px; display: flex; flex-direction: column; align-items: center; flex: none; padding-top: 2px; }
.panel footer { margin-top: auto; height: 20px; line-height: 19px; font-size: 12.500px; display: flex; align-items: center; gap: 6px; letter-spacing: -.15px; }
.p-select { width: 56px; } .p-props { width: 63px; } .p-type { width: 254px; } .p-clip { width: 79px; }
.p-geom { width: 143px; } .p-ctrl { width: 55px; } .p-mod { width: 237px; } .p-view { flex: 1; align-items: flex-start; }
.p-view footer { padding-left: 19px; }
.big { display: flex; flex-direction: column; align-items: center; font-size: 12.500px; gap: 2px; padding-top: 4px; letter-spacing: -.1px; }
.big.on { width: 44px; height: 72px; border: 1px solid #72bbe2; background: #daeef7; padding-top: 3px; letter-spacing: -.3px; }
.big.dim { color: #bbb; }
.p-props { gap: 3px; }
.props-on { width: 38px; height: 34px; border: 1px solid #72bbe2; background: #daeef7; display: flex; justify-content: center; }
.typebox { width: 249px; height: 71px; border: 1px solid #b4b4b4; padding: 1px 7px 0 2px; display: flex; align-items: flex-start; }
.typebox i { width: 66px; height: 66px; border: 1px solid #b4b4b4; margin-right: 4px; }
.typebox p { line-height: 15px; padding-top: 11px; flex: 1; font-size: 12.500px; }
.typebox svg, .typebox2 svg { align-self: center; }
.cols { display: flex; width: 100%; height: 72px; }
.stack { display: grid; grid-template-rows: repeat(3, 24px); align-items: center; }
.p-clip .cols { padding-left: 12px; gap: 12px; }
.p-clip .big { padding-top: 3px; }
.tool { display: flex; align-items: center; font-size: 12.500px; }
.tool span { margin: 0 7px 0 5px; letter-spacing: -.1px; }
.p-geom .cols { padding-left: 6px; }
.p-geom .stack:first-child { width: 77px; }
.p-geom .stack:nth-child(2) { width: 25px; }
.mat { gap: 6px; }
.p-mod .cols { padding-left: 8px; }
.biggrid { display: grid; grid-template-columns: 37px 38px 39px 41px; grid-template-rows: 36px 36px; align-items: start; }
.biggrid svg { margin-top: 1px; }
.smallgrid { display: grid; grid-template-columns: 26px 26px 16px; grid-template-rows: repeat(3, 24px); align-items: center; }
.viewgrid { display: grid; grid-template-columns: 21px 15px 16px; grid-template-rows: repeat(3, 24px); align-items: center; padding-left: 7px; }

.qat { height: 25px; background: #d9d9d9; display: grid; grid-template-columns: 24px 24px 23px 13px 23px 13px 23px 13px 24px 23px 8px 23px 7px 24px 13px 24px 24px 23px 8px 23px 12px 21px 27px 8px 24px 21px 14px 10px; align-items: center; padding-left: 8px; }
.sep { width: 1px; height: 21px; background: #a8a8a8; }
.thin { width: 24px; height: 22px; border: 1px solid #72bbe2; background: #cfe3ee; display: flex; align-items: center; justify-content: center; }
.a-icon { font: bold 18px/18px "Liberation Sans"; color: #555; padding-left: 2px; }
.options { height: 26px; background: #ebefdf; line-height: 27px; padding-left: 8px; font-size: 12.500px; letter-spacing: -.1px; }
.work { flex: none; height: 821px; border-top: 2px solid #c3c3c3; display: flex; background: #f5f5f5; }

/* ---- Docked palettes ---- */
.dock { width: 276px; border-right: 2px solid #c3c3c3; display: flex; flex-direction: column; }
.dock h2 { font-size: 12.500px; font-weight: 400; height: 17px; line-height: 16px; background: #d9d9d9; display: flex; justify-content: space-between; align-items: center; padding: 0 1px 0 2px; letter-spacing: 0; width: 272px; }
.props { height: 410px; border-bottom: 2px solid #c3c3c3; background: #f5f5f5; }
.typebox2 { width: 270px; height: 71px; margin: 0 0 0 1px; border: 1px solid #b4b4b4; display: flex; padding: 1px 6px 0 2px; background: #f5f5f5; }
.typebox2 i { width: 66px; height: 66px; border: 1px solid #b4b4b4; margin-right: 3px; }
.typebox2 p { flex: 1; line-height: 16px; padding-top: 17px; letter-spacing: -.12px; }
.filter { height: 31px; display: flex; align-items: flex-start; padding-left: 1px; }
.filter > svg { margin: 5px 5px 0 5px; }
.filter > span { padding-top: 5px; font-size: 12.500px; letter-spacing: -.1px; }
.combo { width: 188px; height: 26px; border-bottom: 2px solid #ccc; display: flex; justify-content: space-between; align-items: center; padding: 2px 5px 0 4px; letter-spacing: -.2px; }
.gridwrap { display: flex; height: 264px; background: #e8e8e8; width: 272px; }
.pgrid { width: 255px; overflow: hidden; padding-left: 1px; background: #fff; border-right: 1px solid #e7e7e7; }
.gh { height: 18px; background: #e7e7e7; font-weight: 700; font-size: 12px; line-height: 16px; padding: 0 6px 0 2px; display: flex; justify-content: space-between; align-items: center; border-bottom: 1px solid #e7e7e7; letter-spacing: -.25px; }
.gr { height: 18px; display: grid; grid-template-columns: 122px 120px 11px; color: #111; line-height: 17px; }
.gr span { border-bottom: 1px solid #e7e7e7; border-right: 1px solid #e7e7e7; overflow: hidden; }
.gr span:first-child { padding-left: 10px; }
.gr span:nth-child(2) { padding-left: 2px; }
.gr.ro { color: #8a8a8a; }
.gr.edit span:nth-child(2) { border: 1px solid #000; line-height: 15px; padding-left: 1px; }
.gr i { width: 9px; height: 15px; border: 1px solid #bbb; background: #f4f4f4; margin: 1px 0 0 1px; }
.sb { flex: 1; display: flex; flex-direction: column; align-items: center; background: #e8e8e8; padding: 6px 0; }
.sb .thumb { width: 8px; border-radius: 4px; background: #8c8c8c; }
.props .thumb { height: 145px; margin-top: 6px; }
.dn { transform: rotate(180deg); margin-top: auto; }
.pfoot { height: 25px; display: flex; align-items: center; gap: 5px; padding: 0 4px 0 3px; background: #f0f0f0; }
.sort { width: 20px; height: 21px; background: #f7f7f7; display: grid; grid-template: 9px 9px / 9px 8px; align-items: center; align-content: center; justify-content: center; }
.sort b { font: bold 8px/9px "Liberation Sans"; color: #41a4df; grid-column: 1; }
.sort b.gray { color: #777; }
.sort svg { grid-area: 1 / 2 / 3 / 3; }
.sort.on { background: #8fcdec; display: flex; align-items: center; border-radius: 2px; }
.pfoot button { width: 70px; height: 18px; margin-left: auto; font: inherit; font-size: 12.500px; letter-spacing: 0; line-height: 15px; color: #aaa; background: #f2f2f2; border: 1px solid #cfcfcf; border-radius: 2px; }
.browser { flex: 1; background: #fff; overflow: hidden; }
.browser h2 { height: 18px; }
.btabs { height: 24px; width: 272px; background: #cdcdcd; display: grid; grid-template-columns: 27px 25px 23px 24px 25px 23px 24px 20px; align-items: center; padding-left: 2px; }
.btabs .on { width: 23px; height: 24px; background: #fff; display: flex; align-items: center; justify-content: center; }
.search { width: 255px; height: 25px; margin: 8px 0 8px 9px; border: 1px solid #e0e0e0; display: flex; align-items: center; gap: 9px; padding-left: 8px; color: #aaa; }
.treewrap { display: flex; height: 324px; width: 272px; border-left: 1px solid #ddd; }
.tree { list-style: none; width: 253px; overflow: hidden; color: #000; background: repeating-linear-gradient(#bbb 0 3px, transparent 3px 5px) 8px 0 / 1px 100% no-repeat, repeating-linear-gradient(#bbb 0 3px, transparent 3px 5px) 24px 21px / 1px 100% no-repeat; }
.tree li { height: 20px; display: flex; align-items: center; line-height: 20px; }
.tree li > i { width: 8px; height: 2px; background: #888; margin-right: 9px; }
.l0 { padding-left: 21px; background: repeating-linear-gradient(90deg, #bbb 0 3px, transparent 3px 5px) 8px 10px / 9px 1px no-repeat; }
.l1 { padding-left: 37px; background: repeating-linear-gradient(90deg, #bbb 0 3px, transparent 3px 5px) 24px 10px / 9px 1px no-repeat; }
.l2 { padding-left: 40px; background: repeating-linear-gradient(#bbb 0 3px, transparent 3px 5px) 40px 0 / 1px 100% no-repeat, repeating-linear-gradient(90deg, #bbb 0 3px, transparent 3px 5px) 40px 10px / 26px 1px no-repeat; }
.l2.last { background-size: 1px 10px, 26px 1px; }
.l2 svg { margin: 0 4px 0 30px; }
.tree .current { font-weight: 700; background-color: #f0f0f0; outline: 1px solid #ddd; outline-offset: -1px; }
.treewrap .thumb { height: 29px; margin-top: 14px; }

/* ---- Drawing view ---- */
.view { flex: 1; border-left: 2px solid #fff; display: flex; flex-direction: column; background: #fff; }
.vtabs { height: 22px; background: #cdcdcd; border-bottom: 2px solid #fff; display: flex; margin-left: -2px; }
.vt { width: 128px; display: flex; align-items: center; gap: 10px; padding-left: 5px; font-size: 12.500px; letter-spacing: -.7px; color: #555; }
.vt.on { background: #fff; padding: 0 5px; color: #222; gap: 10px; letter-spacing: 0; }
.vt.sh { gap: 9px; padding-left: 6px; }
.vt .close { margin-left: auto; }
.canvas { flex: none; }
.vbar { height: 17px; background: #e9e9e9; display: flex; }
.vleft { width: 380px; background: #f5f5f5; display: grid; grid-template-columns: 78px repeat(11, 26px) 16px; align-items: center; justify-items: center; border-right: 1px solid #d5d5d5; }
.vleft span { font-size: 12px; line-height: 16px; letter-spacing: -.1px; padding-left: 4px; }
.lt { width: 16px; height: 17px; background: #e4e4e4; display: flex; justify-content: center; align-items: center; }
.status { height: 24px; background: #f5f5f5; display: flex; align-items: center; padding-left: 1px; font-size: 12.500px; letter-spacing: -.15px; }
.status span { width: 893px; flex: none; }

/* ---- Dynamo Player window ---- */
.dynamo { position: absolute; left: 960px; top: 1px; width: 960px; height: 1040px; background: #fff; border: 1px solid #8b8b8b; box-shadow: 0 3px 12px rgba(0,0,0,.45); display: flex; flex-direction: column; font-size: 13px; letter-spacing: 0; color: #4a4a4a; }
.dtitle { height: 30px; display: flex; align-items: center; gap: 5px; padding: 0 18px 0 8px; color: #999; font-size: 12px; letter-spacing: -.1px; }
.wc { margin-left: auto; display: flex; gap: 36px; }
.dhead { height: 127px; border-bottom: 1px solid #e6e6e6; display: flex; justify-content: space-between; padding: 10px 26px 0 16px; }
.dhead h1 { font-size: 17px; line-height: 26px; font-weight: 400; color: #222; letter-spacing: .15px; }
.dinfo p { font-style: italic; line-height: 26px; color: #666; font-size: 12.500px; letter-spacing: .17px; }
.dinfo b { color: #333; }
.dinfo a { color: #3a78b5; }
.dicons { display: flex; gap: 14px; height: 28px; align-items: center; }
.help { width: 16px; height: 16px; border-radius: 8px; background: #777; color: #fff; font: bold 13px/16px "Liberation Sans"; text-align: center; }
.dlist { height: 803px; display: flex; overflow: hidden; }
.rows { flex: 1; }
.row { height: 54px; border-bottom: 1px solid #cdcdcd; display: flex; align-items: center; padding: 0 12px 0 13px; }
.row.first { height: 46px; padding-bottom: 8px; }
.row label { display: flex; align-items: center; width: 476px; }
.row label i { width: 14px; height: 14px; border: 1px solid #4a4636; margin: 1px 4px 0 1.500px; }
.orange { background: #f8762b; } .yellow { background: #fff01e; } .green { background: #2ccc24; }
.row > svg { color: #128218; margin: 0 8px 0 -4px; }
.inp, .pick { flex: 1; height: 24px; border: 1px solid #e2e2e2; padding-left: 8px; line-height: 22px; font-size: 12.500px; color: #3c3c3c; margin-top: 2px; }
.first .inp { height: 27px; border-bottom-color: #ccc; margin-top: 1px; line-height: 24px; }
.pick { display: flex; justify-content: space-between; align-items: center; padding-right: 8px; letter-spacing: -.1px; }
.pick.ko { letter-spacing: .22px; }
.pick.wide { letter-spacing: .7px; }
.track { width: 8px; background: #f2f2f2; }
.track i { width: 4px; height: 224px; border-radius: 2px; background: #b0b0b0; margin: 229px auto 0 2px; }
.run { height: 30px; border-top: 5px solid #6c9a34; border-bottom: 1px solid #dcdcdc; color: #666; font-size: 12px; display: flex; align-items: center; gap: 6px; padding-left: 11px; letter-spacing: -.05px; }
.run svg { color: #6c9a34; }
.dfoot { flex: 1; display: flex; align-items: center; gap: 7px; padding: 0 12px 0 12px; color: #666; }
.dfoot span { margin-right: auto; }
.dfoot button { width: 53px; height: 24px; font: inherit; font-size: 12.500px; color: #444; border: 1px solid #bbb; border-radius: 2px; background: #fff; }
.dfoot .primary { width: 49px; background: #0d96d8; color: #fff; font-weight: 700; border: 0; box-shadow: 0 0 0 2px #9fd6f1; }
.cursor { position: absolute; left: 507px; top: 50px; }
```
